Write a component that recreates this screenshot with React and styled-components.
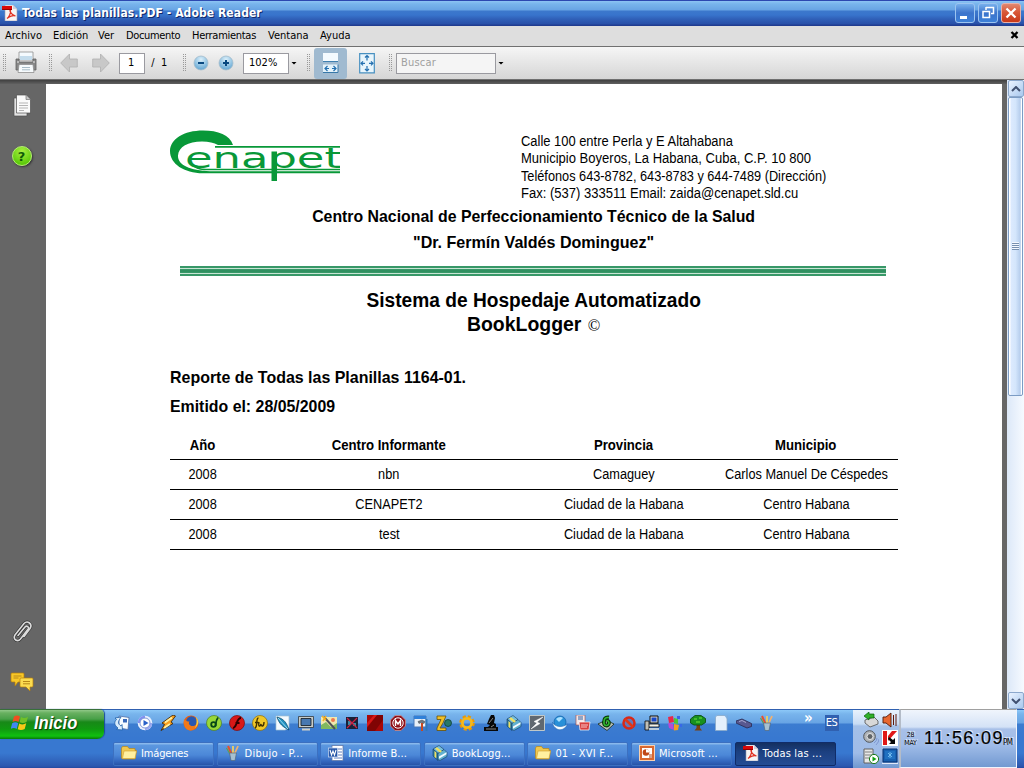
import React from 'react';
import styled, { createGlobalStyle } from 'styled-components';

const Global = createGlobalStyle`
  *{box-sizing:border-box}
  html,body{margin:0;padding:0;overflow:hidden}
  body{font:11px "DejaVu Sans Condensed","DejaVu Sans",sans-serif;color:#000;cursor:default}
  svg{display:block;flex:none}
`;

const Screen = styled.div`width:1024px;height:768px;display:flex;flex-direction:column;overflow:hidden;background:#666;`;

/* ---------- window chrome ---------- */
const TitleBar = styled.header`
  height:26px;flex:none;display:flex;align-items:center;padding:0 3px 0 2px;color:#fff;
  background:linear-gradient(#2c48b0 0,#2c48b0 1px,#8cc4f4 1px,#78b4ec 4px,#68a4e4 10px,#3c78cc 11px,#3874cc 15px,#3060b8 19px,#2850a8 24px,#203c90 25px);
`;
const Title = styled.h1`
  flex:1;margin:0 0 0 4px;font:bold 12px "DejaVu Sans Condensed","DejaVu Sans",sans-serif;letter-spacing:.08px;
  text-shadow:1px 1px 0 #102868;white-space:nowrap;
`;
const WindowButton = styled.button`
  width:20px;height:20px;margin-left:3px;padding:0;border:1px solid ${p => (p.$close ? '#e8b0a8' : '#9cc4f0')};border-radius:3px;
  background:${p => (p.$close ? 'linear-gradient(#e08870,#d85838 45%,#c83818)' : 'linear-gradient(#78b0ec,#3c74cc 50%,#3c80d8)')};
  display:flex;align-items:center;justify-content:center;
`;
const MenuBar = styled.nav`
  height:20px;flex:none;display:flex;align-items:center;padding:0 5px 2px;background:#dedede;
`;
const MenuItem = styled.span`width:${p => p.$w}px;letter-spacing:${p => p.$ls || 0}px;white-space:nowrap;`;
const MenuClose = styled.span`margin-left:auto;`;
const Toolbar = styled.div`
  height:34px;flex:none;display:flex;align-items:center;padding-left:3px;
  border-top:1px solid #707070;border-bottom:1px solid #707070;background:linear-gradient(#f6f6f6,#ececec 30%,#d6d6d6);
`;
const Grip = styled.i`
  width:4px;height:18px;flex:none;margin-right:${p => p.$gap}px;
  background:radial-gradient(circle at .5px .5px,#999 .7px,transparent .8px) 0 0/2px 2px;
`;
const Slot = styled.span`width:${p => p.$w}px;flex:none;display:flex;align-items:center;white-space:pre;line-height:19px;`;
const PageTotal = styled(Slot)`padding-bottom:2px;`;
const Field = styled.span`
  width:${p => p.$w}px;height:21px;flex:none;padding-left:${p => p.$pad}px;border:1px solid #9a9aa0;background:${p => (p.$dim ? '#f5f5f5' : '#fff')};
  color:${p => (p.$dim ? '#a0a0a0' : '#000')};line-height:18px;letter-spacing:${p => p.$ls || 0}px;
`;
const Caret = styled.i`
  width:6px;height:3px;flex:none;margin:0 ${p => p.$gap || 0}px 0 2px;background:#000;clip-path:polygon(0 0,100% 0,50% 100%);
`;
const Toggle = styled.span`
  width:33px;height:31px;flex:none;margin-right:12px;border-radius:3px;background:#a0bad0;display:flex;align-items:center;justify-content:center;
`;

/* ---------- document area ---------- */
const Shadow = styled.div`height:4px;background:linear-gradient(#404040,#606060);`;
const Body = styled.div`height:629px;flex:none;display:flex;`;
const Left = styled.div`width:1007px;display:flex;flex-direction:column;`;
const Work = styled.div`flex:1;display:flex;`;
const SideBar = styled.aside`
  width:46px;display:flex;flex-direction:column;align-items:center;padding:10px 3px 17px 0;background:#666;
`;
const SideIcon = styled.span`margin-bottom:${p => p.$gap || 0}px;${p => p.$push && 'margin-top:auto;'}`;
const Page = styled.main`width:956px;background:#fff;padding:46px 104px 0 124px;`;
const Fit = styled.span`
  display:inline-block;white-space:nowrap;transform:scaleX(${p => p.$x || 0.92});transform-origin:${p => (p.$left ? 'left' : 'center')} center;
`;
const Letterhead = styled.div`height:74px;display:flex;`;
const Address = styled.address`
  margin:3px 0 0 181px;width:306px;font:normal 14px/17.4px "Liberation Sans",Arial,sans-serif;
  display:flex;flex-direction:column;align-items:flex-start;color:#000;
`;
const Institution = styled.p`margin:0;text-align:center;font:bold 17px/26px "Liberation Sans",Arial,sans-serif;white-space:nowrap;`;
const Rule = styled.div`
  height:10px;margin:10px 12px 12px 10px;
  background:linear-gradient(#389868 0 2px,#c8e4d4 2px 3px,#389868 3px 4px,#309060 4px 6px,#389868 6px 7px,#c8e4d4 7px 8px,#389868 8px 10px);
`;
const System = styled.p`margin:0;text-align:center;font:bold 20px/24px "Liberation Sans",Arial,sans-serif;`;
const Mark = styled.span`font:17px/20px "Liberation Serif",serif;margin-left:1px;`;
const ReportInfo = styled.div`margin:27px 0 10px;font:bold 17px/29px "Liberation Sans",Arial,sans-serif;`;
const Row = styled.div`
  width:728px;height:${p => (p.$head ? 29 : 30)}px;display:grid;grid-template-columns:65px 308px 161px 194px;align-items:center;justify-items:center;
  padding-bottom:${p => (p.$head ? 0 : 1)}px;
  border-bottom:1px solid #000;font:${p => (p.$head ? 'bold 14px' : '14px')}/28px "Liberation Sans",Arial,sans-serif;
  & > :last-child{margin-left:10px;}
`;
const ScrollBar = styled.div`width:17px;height:629px;display:flex;flex-direction:column;background:linear-gradient(90deg,#dce8f8,#f6faff);`;
const ScrollKey = styled.button`
  width:16px;height:17px;margin:0 0 0 1px;padding:0;flex:none;border:1px solid #8ca8cc;border-radius:2px;background:linear-gradient(135deg,#eaf3ff,#a9c8ee);
  display:flex;align-items:center;justify-content:center;
`;
const Thumb = styled.div`
  width:15px;height:299px;margin:0 0 auto 1px;padding-bottom:2px;border:1px solid #7c9cc4;border-radius:2px;
  background:linear-gradient(90deg,#fff 0 1px,#dceafe 2px,#d4e6fc 50%,#b4ccec 88%,#fff 90%);
  display:flex;align-items:center;justify-content:center;
`;
const Ridges = styled.i`width:7px;height:8px;background:repeating-linear-gradient(#f4f8ff 0 1px,#7890b0 1px 2px);`;

/* ---------- task bar ---------- */
const TaskBar = styled.footer`
  height:59px;flex:none;display:flex;
  background:linear-gradient(#3060b0 0 1px,#8cc8f8 1px,#78b4ec 5px,#68a4e4 14px,#3c7cd0 15px,#3878d0 29px,#3878d0 44px,#2c58b0 57px,#2448a0);
`;
const Start = styled.button`
  width:104px;height:30px;flex:none;display:flex;align-items:center;padding:0 0 3px 11px;margin:0;border:0;border-radius:0 5px 7px 0;color:#fff;
  background:linear-gradient(#387038 0 1px,#90c888 1px,#68b060 4px,#48a048 10px,#188818 13px,#109810 20px,#10c010 27px,#087808);
  box-shadow:1px 0 1px #184c98;font:italic bold 18px/20px "Liberation Sans",sans-serif;text-shadow:1px 1px 1px #083808;
`;
const StartText = styled(Fit)`margin-left:4px;`;
const Bars = styled.div`width:749px;display:flex;flex-direction:column;`;
const Launch = styled.div`height:28px;display:flex;align-items:center;padding-left:10px;`;
const LaunchItem = styled.span`width:23.04px;flex:none;display:flex;`;
const More = styled.span`margin:-10px 0 0 22px;color:#fff;font:bold 15px "DejaVu Sans Condensed",sans-serif;`;
const Lang = styled.span`margin-left:12px;padding-left:1px;width:14px;height:16px;background:#3060b0;color:#fff;line-height:16px;letter-spacing:-.3px;`;
const Tasks = styled.div`display:flex;gap:2.6px;padding:5px 0 0 9px;`;
const Task = styled.button`
  width:101px;height:24px;flex:none;display:flex;align-items:center;gap:4px;padding:0 0 2px 7px;color:#fff;border:1px solid ${p => (p.$on ? '#102c68' : '#3c70c0')};
  border-radius:2px;font:11px "DejaVu Sans Condensed","DejaVu Sans",sans-serif;white-space:nowrap;
  background:${p => (p.$on ? 'linear-gradient(#143060,#1c4080 40%,#244c94)' : 'linear-gradient(#88b8ec 0 1px,#5c98e0 2px,#4c88d8 12px,#3468c0 18px,#2854a8)')};
`;
const TaskText = styled.span`letter-spacing:${p => p.$ls || 0}px;`;
const Tray = styled.div`
  width:46px;display:grid;grid-template-columns:16px 16px;grid-auto-rows:16px;gap:3px;row-gap:2px;padding:3px 0 0 10px;
  background:linear-gradient(#3060b0 0 1px,#e8f2fc 1px,#c8dcf4 15px,#a4c0e8 17px,#a0bce8 44px,#7098d0);
`;
const Clock = styled.div`
  width:118px;display:flex;align-items:center;border:1px solid #f0f4fc;border-top-color:#a0a0a0;border-left:2px solid #b4bcc8;padding-left:2px;
  background:linear-gradient(#f0f5fc,#d4e2f6 17px,#a8c0e8 19px,#a0bce8 35px,#7098d0 58px);text-shadow:1px -1px 0 #e4ecf8;
`;
const DateText = styled.span`width:15px;font:7px/8px "DejaVu Sans Condensed",sans-serif;text-align:center;letter-spacing:-.2px;`;
const Time = styled.span`margin-left:6px;font:18px "Liberation Sans",sans-serif;letter-spacing:1.4px;-webkit-text-stroke:.2px #000;`;
const Meridiem = styled.span`margin:7px 0 0 -1px;font:8px "DejaVu Sans Condensed",sans-serif;letter-spacing:-.5px;`;

/* ---------- icons ---------- */
const I = ({ s = 16, children }) => <svg width={s} height={s} viewBox="0 0 16 16">{children}</svg>;

const Pdf = () => (
  <I>
    <path d="M3 0h8l4 4v12H3z" fill="#f6f4f4" stroke="#a0a0b0" strokeWidth=".6" />
    <path d="M11 0v4h4" fill="#d0d0dc" />
    <path d="M5 13.500C7 12 9 8 8.500 5.500 7 4.500 8.500 9.500 13.500 11 11 10 7 11.500 5 13.500" fill="none" stroke="#e03020" strokeWidth="1.200" />
    <path d="M0 1h10v4H0z" fill="#d80808" /><path d="M0 4h10v1H0z" fill="#900" />
  </I>
);
const Folder = () => (
  <I><path d="M0.500 3l1-1.500h5L8 3.500h6v2H15.500L14 14H1.500L.5 13z" fill="#f0c850" stroke="#b88818" strokeWidth=".7" /><path d="M3 6h12.500L14 13.500H1.500z" fill="#fff0a0" stroke="#d0a030" strokeWidth=".6" /></I>
);
const Brushes = () => (
  <I>
    <path d="M3 1l4 9" stroke="#e8502c" strokeWidth="2" /><path d="M8 1v9" stroke="#f0d060" strokeWidth="1.800" /><path d="M13 1l-4 9" stroke="#f0b070" strokeWidth="1.800" />
    <path d="M1.500 3l4 7" stroke="#60a050" strokeWidth="1.200" /><path d="M4.500 8h7l-1.500 7.500H6z" fill="#a8c0d0" stroke="#506880" strokeWidth=".7" />
  </I>
);
const Books = () => (
  <I>
    <path d="M1 4l6-3.500 5 4-6 4z" fill="#78c0dc" stroke="#184060" strokeWidth=".6" />
    <path d="M1 4v7l5 4.500V8.500z" fill="#2878a8" stroke="#184060" strokeWidth=".6" />
    <path d="M6 8.500l6-4 3 3v4L8 15.500l-2-1z" fill="#60b0d0" stroke="#184060" strokeWidth=".6" />
    <path d="M3 3.500l2-1.200 5 4-2 1.400zM2.500 6v6l1.800 1.200V7.500z" fill="#f0e060" /><path d="M7 11.500l7.500-4.300v2L7 13.800z" fill="#f4fbff" />
  </I>
);
const Word = () => (
  <I><rect x="4" y="0.500" width="11" height="15" fill="#fff" stroke="#6078a8" strokeWidth=".8" /><path d="M10 4h4M10 7h4M10 10h4M6 13h8" stroke="#6080c0" /><rect x="0.500" y="3" width="9" height="9" fill="#2858a8" stroke="#c8d8f0" strokeWidth=".7" /><path d="M2 5l1.500 5L5 6l1.500 4L8 5" fill="none" stroke="#fff" strokeWidth="1.100" /></I>
);
const PowerPoint = () => (
  <I><rect x="0.500" y="0.500" width="15" height="15" fill="#d86830" stroke="#f8d0b0" /><rect x="3" y="3" width="10" height="10" fill="#fff" /><circle cx="7" cy="7.500" r="3.300" fill="#c04818" /><path d="M7 7.500V4.200a3.300 3.300 0 0 1 3.300 3.300z" fill="#fff" /><path d="M10 10h3M10 12h3" stroke="#b04010" /></I>
);

const Sync = () => <I><path d="M5 1l10 1.500-1 12L5 13z" fill="#f8fcff" stroke="#5070a8" strokeWidth=".8" /><path d="M9 4h4v3.500H9z" fill="#3868b8" /><path d="M1 3l6-1-1.500 2.500C4 7 4 9 7 11l1-1.500.5 5.500-6-.5L4 13C0 10 0 7 2.500 4.500z" fill="#d8ecfc" stroke="#2060a8" strokeWidth=".8" /></I>;
const Player = () => <I><circle cx="8" cy="8" r="7.300" fill="#e8f0ff" /><path d="M8 .7A7.300 7.300 0 0 0 .7 8H4a4 4 0 0 1 4-4z" fill="#8090f0" /><path d="M15.300 8A7.300 7.300 0 0 1 8 15.300V12a4 4 0 0 0 4-4z" fill="#98a8f0" /><circle cx="8" cy="8" r="5" fill="#fff" stroke="#8098d8" /><path d="M6.500 5l5 3-5 3z" fill="#2860c8" /></I>;
const Winamp = () => <I><path d="M13 0L2 8l2.500 1.500L1 15.500 13 8.500l-2-1.500L15.500 1z" fill="#f8a020" stroke="#402808" strokeWidth=".9" /><path d="M12 2.500L5 7.500M4 13l6-4" stroke="#fff0a0" strokeWidth="1.800" /></I>;
const Firefox = () => <I><circle cx="8" cy="8" r="7.500" fill="#e86010" /><circle cx="8.500" cy="6.500" r="5.300" fill="#2858b0" /><path d="M1 4c2 2 3 2.500 5.500 2.500-1.500 2 0 4.500 3 4.500s5-2 5-5c1 5-3 9.500-7 9.500S0 12 1 4z" fill="#f07818" /><path d="M13 2c3 3 3 8-1 11 2-4 2-7 1-11z" fill="#f8d040" /></I>;
const Dreamweaver = () => <I><circle cx="8" cy="8" r="7.500" fill="#98d838" stroke="#508020" strokeWidth=".7" /><circle cx="7.500" cy="9.500" r="2.300" fill="none" stroke="#084818" strokeWidth="1.800" /><path d="M9.500 11C10 7 10 5 12 2.500" stroke="#084818" strokeWidth="1.800" fill="none" /></I>;
const Flash = () => <I><circle cx="8" cy="8" r="7.500" fill="#d81818" stroke="#800808" strokeWidth=".7" /><path d="M12 3C7 3 8.500 12 4 13M6.500 8h4" stroke="#300000" strokeWidth="2" fill="none" /></I>;
const Fireworks = () => <I><circle cx="8" cy="8" r="7.500" fill="#f0c828" stroke="#907008" strokeWidth=".7" /><path d="M6.500 3C3.500 3 6 12 3 13M3 7.500h3.500M7 7c-1 5 1 5 2 2 0 3 3 3 3-2" stroke="#403000" strokeWidth="1.400" fill="none" /></I>;
const Quill = () => <I><path d="M1 1h13v12l-4 2H1z" fill="#f4faff" stroke="#a0c0d0" strokeWidth=".7" /><path d="M2 2c8 2 10 7 12 13C8 12 4 9 2 2z" fill="#2090c0" stroke="#084868" strokeWidth=".7" /><path d="M3 3l10 11" stroke="#c0f0ff" strokeWidth=".8" /></I>;
const Monitor = () => <I><path d="M.5 1.500h15v11H.5z" fill="#c8ccc8" stroke="#303840" strokeWidth=".8" /><path d="M3 3.500h10v7H3z" fill="#4878b0" stroke="#101820" strokeWidth=".8" /><path d="M4 14.500h8" stroke="#d0d0c8" strokeWidth="2" /></I>;
const Wand = () => <I><path d="M0 2h16v12H0z" fill="#f0e8b0" /><path d="M0 10l5-3 5 5 6-4v6H0z" fill="#80b860" /><circle cx="12" cy="5" r="2" fill="#f07850" /><path d="M3 2l11 12" stroke="#505058" strokeWidth="2" /><path d="M1 1l4 4M5 1L2 6" stroke="#f8b020" strokeWidth="1.500" /></I>;
const Crossed = () => <I><path d="M2 2h12v12H2z" fill="#182038" /><path d="M4 6h3v4H4zM9 8h3v3H9z" fill="#3888a0" /><path d="M3 3l10 10M13 3L3 13" stroke="#d02040" strokeWidth="1.200" /></I>;
const RedSquare = () => <I><path d="M0 0h16v16H0z" fill="#a80808" /><path d="M10 0h6v5L8 16H0v-3z" fill="#800404" /><path d="M7 0h3L0 12V8z" fill="#d81818" /></I>;
const McAfee = () => <I><path d="M5 .5h6L15.500 5v6L11 15.500H5L.5 11V5z" fill="#901018" stroke="#c89090" strokeWidth=".8" /><circle cx="8" cy="8" r="5.200" fill="#901018" stroke="#fff" /><path d="M5.500 11V5.500L8 9l2.500-3.500V11" stroke="#fff" strokeWidth="1.400" fill="none" /></I>;
const Tools = () => <I><path d="M1 1h12v11H1z" fill="#e8f0f8" stroke="#4878b8" /><path d="M1 1h12v3H1z" fill="#3080d8" /><path d="M5 6.500l4-1.500 3 1.500-1 2-3-1-2 1z" fill="#707880" stroke="#404850" strokeWidth=".5" /><path d="M9 8v8" stroke="#c84820" strokeWidth="2" /><path d="M13.500 4v12" stroke="#3078b8" strokeWidth="2" /></I>;
const Seven = () => <I><path d="M1 1h9L7 8l-3 5h6v2.500H1V13l4-8.500H1z" fill="#f0c028" stroke="#685008" strokeWidth=".8" /><circle cx="12" cy="8" r="3.500" fill="#287868" stroke="#083828" strokeWidth=".7" /></I>;
const Gear = () => <I><circle cx="8" cy="8" r="6.300" fill="none" stroke="#e89808" strokeWidth="3" strokeDasharray="3 1.950" /><circle cx="8" cy="8" r="4.600" fill="none" stroke="#f8b818" strokeWidth="2.800" /></I>;
const Microscope = () => <I><path d="M8 0h3l1 3-1 5 2 1v3h2v4H1v-4h4l2-2-3-1 2-5z" fill="#080808" /><path d="M6 8l4-5M3 14h10M8 12l3-2" stroke="#a8a8a8" strokeWidth=".8" /></I>;
const Bolt = () => <I><path d="M.5.5h15v15H.5z" fill="#606870" stroke="#c0c8c8" /><path d="M14 2L5 6.500 8 8l-6 6 9-5.500-3-1.500z" fill="#fff" stroke="#fff" strokeWidth=".5" /></I>;
const Globe = () => <I><circle cx="8" cy="7" r="6" fill="#2890d8" stroke="#1060a8" strokeWidth=".7" /><path d="M4 4c2-2 5-3 7-1L7 7z" fill="#a8e0ff" /><path d="M0 7c3 5 10 6 15.500 2-3 8-13 8-15.500-2z" fill="#f4fbff" stroke="#2870b8" strokeWidth=".7" /></I>;
const Papers = () => <I><path d="M1 0h9v10H1z" fill="#f4e8e8" stroke="#a05858" strokeWidth=".7" /><path d="M3 2h5M3 4h5" stroke="#3060a0" /><path d="M4 7h11l-1 8H5z" fill="#d84040" stroke="#fff" strokeWidth=".7" /><path d="M6 10h7M6 12h6" stroke="#f8c8c8" /></I>;
const GreenSix = () => <I><path d="M0 9l8-4 8 4-7 6.500z" fill="#b8c0b8" stroke="#182818" strokeWidth=".8" /><path d="M11 2.500C7 2 6 4 6 7.500a2.500 2.500 0 1 0 2.500-2" stroke="#083808" strokeWidth="3.800" fill="none" /><path d="M11 2.500C7 2 6 4 6 7.500a2.500 2.500 0 1 0 2.500-2" stroke="#30b830" strokeWidth="1.600" fill="none" /></I>;
const NoEntry = () => <I><circle cx="8" cy="8" r="5.500" fill="#6878b8" stroke="#d82818" strokeWidth="2.500" /><path d="M4 4l8 8" stroke="#e03818" strokeWidth="2.500" /></I>;
const Pc = () => <I><path d="M6 1h8v7H6z" fill="#d8d8d0" stroke="#080808" /><path d="M7.500 2.500h5v4h-5z" fill="#1848c8" /><path d="M4 9h11v3H4z" fill="#f0f0e8" stroke="#080808" strokeWidth=".8" /><path d="M1 6h4v9H1z" fill="#c0c0b8" stroke="#080808" strokeWidth=".8" /><path d="M5 14h10" stroke="#e8e8e0" strokeWidth="1.500" /></I>;
const Cubes = () => <I><path d="M1 2l5-1 1 6-5 1z" fill="#e82848" /><path d="M7 3l4 1v5L7 8z" fill="#48c838" /><path d="M1 8l5 1 1 6-5-2z" fill="#b848d8" /><path d="M7 9l5 1-1 5-4 .5z" fill="#f0a020" /><path d="M10 1h3v3h-3zM13 9h2v3h-2z" fill="#3868e8" /></I>;
const Tree = () => <I><path d="M6.500 8h3.500v5l2 2.500H4.500l2-2.500z" fill="#784010" /><path d="M5 .5h6l4.500 3v4l-4 2.500H4L.5 8V4z" fill="#189020" stroke="#044808" strokeWidth=".8" /><path d="M4 4h3M9 3h3M6 7h4" stroke="#50c830" strokeWidth="1.300" /></I>;
const Sheet = () => <I><path d="M4 .5h10v15H2.500V2z" fill="#e4f0fc" stroke="#88a8c8" strokeWidth=".8" /><path d="M11 0h3v4z" fill="#80b0e0" /></I>;
const Gadget = () => <I><path d="M0 6l6-2 9.500 4.500v3L11 13 0 8z" fill="#585890" stroke="#282850" strokeWidth=".8" /><path d="M3 6.500l3-1 4 2" stroke="#a8a8d0" fill="none" /></I>;

const launchIcons = [Sync, Player, Winamp, Firefox, Dreamweaver, Flash, Fireworks, Quill, Monitor, Wand, Crossed, RedSquare, McAfee, Tools, Seven, Gear, Microscope, Books, Bolt, Globe, Papers, GreenSix, NoEntry, Pc, Cubes, Tree, Sheet, Gadget, Brushes];

const Printer = () => (
  <svg width="22" height="24" viewBox="0 0 22 24">
    <path d="M4 1h14v8H4z" fill="#f4fafe" stroke="#909090" strokeWidth=".8" /><path d="M5 5h12v4H5z" fill="#c4dcec" />
    <path d="M1 8h3v3h14V8h3v11H1z" fill="#888" stroke="#606060" strokeWidth=".8" /><path d="M2 10h2v2h14v-2h2v2H2z" fill="#b8b8b8" />
    <path d="M4 13.500h14l1 8H3z" fill="#f6fafc" stroke="#909090" strokeWidth=".8" /><path d="M7 16.500h8M7 18.800h8" stroke="#a8bcc8" />
  </svg>
);
const Arrow = ({ flip }) => (
  <svg width="18" height="20" viewBox="0 0 18 20"><path transform={flip ? 'matrix(-1 0 0 1 18 0)' : undefined} d="M.7 10L9.500 1v5H17.300v8H9.500v5z" fill="#c8c8c8" stroke="#b0b0b0" strokeWidth=".8" /></svg>
);
const Round = ({ plus }) => (
  <svg width="16" height="16" viewBox="0 0 16 16">
    <defs><radialGradient id={plus ? 'rp' : 'rm'} cx=".5" cy=".25" r=".8"><stop offset="0" stopColor="#dcf0fa" /><stop offset="1" stopColor="#58a0d0" /></radialGradient></defs>
    <circle cx="8" cy="8" r="7" fill={`url(#${plus ? 'rp' : 'rm'})`} stroke="#a4bccc" strokeWidth=".8" /><path d={plus ? 'M5 8h6M8 5v6' : 'M5 8h6'} stroke="#084880" strokeWidth="2" />
  </svg>
);
const FitWidth = () => (
  <svg width="17" height="22" viewBox="0 0 17 22">
    <path d="M1 1h15v9H1z" fill="#f4fafe" /><path d="M1 9.500h15" stroke="#4080b0" /><path d="M1 12.500h15v8H1z" fill="#e4f2fa" /><path d="M1 20.500h15v-8" fill="none" stroke="#3878a8" />
    <path d="M3 16.500h4M10 16.500h4M5.500 14L3 16.500 5.500 19M11.500 14l2.500 2.500-2.500 2.500" fill="none" stroke="#2470b0" strokeWidth="1.200" />
  </svg>
);
const FitPage = () => (
  <svg width="16" height="21" viewBox="0 0 16 21">
    <path d="M.7.700h14.600v19.200H.7z" fill="#e8f5fc" stroke="#4890c0" strokeWidth="1.200" />
    <path d="M8 2.500v5M8 13v5M2 10.300h4M10 10.300h4M6 4.500l2-2 2 2M6 16l2 2 2-2M4 8.300l-2 2 2 2M12 8.300l2 2-2 2" fill="none" stroke="#2470b0" strokeWidth="1.200" />
  </svg>
);
const Pages = () => (
  <svg width="20" height="24" viewBox="0 0 20 24">
    <path d="M2 4h13v18H2z" fill="#e4e4e4" stroke="#505050" strokeWidth=".7" /><path d="M4.500 1h9.500l4.500 4.500V19h-14z" fill="#fafafa" stroke="#505050" strokeWidth=".7" />
    <path d="M14 1v4.500h4.500" fill="#c8c8c8" stroke="#606060" strokeWidth=".6" /><path d="M7 9h9M7 11.500h9M7 14h9M7 16.500h5" stroke="#b4b4b4" />
  </svg>
);
const HelpBall = styled.span`
  width:20px;height:20px;display:flex;align-items:center;justify-content:center;border-radius:50%;border:1px solid #b4f070;
  background:radial-gradient(circle at 50% 25%,#a8f040,#58c808 80%);color:#105c08;font:bold 13px "DejaVu Sans",sans-serif;box-shadow:1px 1px 2px #333;
`;
const Clip = () => (
  <svg width="22" height="25" viewBox="0 0 22 25">
    <g fill="none" strokeLinecap="round">
      <path d="M7 15.500L14 7c1.800-2 4.500 0 3 2.300L9.500 19c-3 3.500-8 .5-5.500-4L13 3.500c3.500-3.500 9 .5 6 5l-6 8" stroke="#303030" strokeWidth="2.800" />
      <path d="M7 15.500L14 7c1.800-2 4.500 0 3 2.300L9.500 19c-3 3.500-8 .5-5.500-4L13 3.500c3.500-3.500 9 .5 6 5l-6 8" stroke="#dcdcdc" strokeWidth="1.600" />
    </g>
  </svg>
);
const Bubbles = () => (
  <svg width="24" height="20" viewBox="0 0 24 20">
    <path d="M2 1h11q1 0 1 1v7q0 1-1 1H8l-3 4v-4H2q-1 0-1-1V2q0-1 1-1z" fill="#f8c828" stroke="#b88008" strokeWidth=".7" /><path d="M3.500 4h8M3.500 6h5" stroke="#b88818" />
    <path d="M11 6h11q1 0 1 1v7q0 1-1 1h-2v4l-4-4h-5q-1 0-1-1V7q0-1 1-1z" fill="#fcdc50" stroke="#b88008" strokeWidth=".7" /><path d="M13 9.500h7M13 11.800h7" stroke="#b88818" />
  </svg>
);
const Flag = () => (
  <svg width="19" height="18" viewBox="0 0 19 18">
    <path d="M3 2.500q3-2 6 0L7.500 8q-3-1.800-6 0z" fill="#f05020" /><path d="M10 3q3.500 2 7-.3L15.500 8q-3.500 2-7 .3z" fill="#70c028" />
    <path d="M1.200 9.200q3-1.800 6 0L5.700 15q-3-1.800-6 0z" fill="#4088f0" /><path d="M8.200 9.500q3.500 2 7-.2L13.700 15q-3.500 2-7 .3z" fill="#f8c818" />
  </svg>
);
const LogoText = styled.text`font:29px "DejaVu Sans",sans-serif;fill:#089838;`;
const Logo = () => (
  <svg width="170" height="52" viewBox="0 0 170 52">
    <path d="M63 15C60 5 48 .5 33 .5 14 .5 0 9 0 21c0 13 14 22 33 22.300h137v-2H40C20 40.500 7.500 35 8 25.500 8.500 17 18 11.500 32 11.500c7 0 12 1.300 16 3.500z" fill="#089838" />
    <path d="M45 16h125v1.800H45z" fill="#089838" />
    <path d="M22 35.500q6 3 14 3.200h134v1.600H34q-8-.9-12-4.800z" fill="#089838" />
    <LogoText x="15" y="37.500" textLength="157" lengthAdjust="spacingAndGlyphs">enapet</LogoText>
    <path d="M101.500 21.500h5.500V51h-5.500z" fill="#089838" />
  </svg>
);

const Drive = () => <I><path d="M2 8l9-3 4 4v3l-8 3-5-4z" fill="#d8d8d8" stroke="#505050" strokeWidth=".8" /><path d="M1 4l5-4v2h5v4H6v2z" fill="#30b028" stroke="#086008" strokeWidth=".7" /></I>;
const Speaker = () => <I><path d="M1 5h3l5-4v14L4 11H1z" fill="#e86830" stroke="#501808" strokeWidth=".9" /><path d="M11.500 3v10M14 2v12" stroke="#601808" strokeWidth="1" /></I>;
const Volume = () => <I><circle cx="6.500" cy="6.500" r="5.800" fill="#b0b4b8" stroke="#505458" /><circle cx="7" cy="6.500" r="3" fill="#606468" stroke="#e8e8e8" /><path d="M11 13q3-2 3-5M13 15q3-3 3-6" stroke="#8098d0" fill="none" /></I>;
const Kaspersky = () => <I><path d="M0 0h16v16H0z" fill="#fff" /><path d="M1 1h4v14H1z" fill="#e01818" /><path d="M10 1h5L6 11V6z" fill="#e01818" /><path d="M7 7l4 3 2-2v6H7l2-2-3-3z" fill="#080808" /></I>;
const Server = () => <I><path d="M1 1h9v14H1z" fill="#e8e8e8" stroke="#606060" /><path d="M2 4h7M2 7h7M2 10h4" stroke="#808080" /><circle cx="11" cy="11" r="4.600" fill="#fff" stroke="#187818" /><path d="M9.500 8.500l4 2.500-4 2.500z" fill="#10a010" /></I>;
const Screenlet = () => <I><path d="M1 1h14v13H1z" fill="#1860b0" stroke="#083070" /><path d="M3 3h10v8H3z" fill="#2070c0" /><path d="M6 5l4 4M10 5L6 9M8 4v6" stroke="#80c8f8" strokeWidth=".8" /><path d="M0 15.500h16" stroke="#e0e8f8" /></I>;

/* ---------- data ---------- */
const menus = [['Archivo', 48], ['Edición', 45, -0.1], ['Ver', 28], ['Documento', 66, -0.35], ['Herramientas', 76, -0.28], ['Ventana', 52], ['Ayuda', 40]];
const address = [
  ['Calle 100 entre Perla y E Altahabana', 0.923], ['Municipio Boyeros, La Habana, Cuba, C.P. 10 800', 0.93],
  ['Teléfonos 643-8782, 643-8783 y 644-7489 (Dirección)', 0.91], ['Fax: (537) 333511 Email: zaida@cenapet.sld.cu', 0.93],
];
const rows = [
  ['2008', 'nbn', 'Camaguey', 'Carlos Manuel De Céspedes'],
  ['2008', 'CENAPET2', 'Ciudad de la Habana', 'Centro Habana'],
  ['2008', 'test', 'Ciudad de la Habana', 'Centro Habana'],
];
const tasks = [
  [Folder, 'Imágenes', -0.15], [Brushes, 'Dibujo - P...', 0.25], [Word, 'Informe B...', 0.1], [Books, 'BookLogg...', 0.05],
  [Folder, '01 - XVI F...', 0.2], [PowerPoint, 'Microsoft ...', 0.1], [Pdf, 'Todas las ...', 0.15],
];

export default function App() {
  return (
    <Screen>
      <Global />
      <TitleBar>
        <Pdf />
        <Title>Todas las planillas.PDF - Adobe Reader</Title>
        <WindowButton><I><path d="M3 11h7v3H3z" fill="#fff" /></I></WindowButton>
        <WindowButton><I><path d="M6 2.500h7.500v6H11M6 2v3M3 6.500h6.500v6H3z" stroke="#fff" strokeWidth="1.500" fill="none" /></I></WindowButton>
        <WindowButton $close><I><path d="M3.500 3.500l9 9M12.500 3.500l-9 9" stroke="#fff" strokeWidth="2.300" /></I></WindowButton>
      </TitleBar>
      <MenuBar>
        {menus.map(([t, w, ls]) => <MenuItem key={t} $w={w} $ls={ls}>{t}</MenuItem>)}
        <MenuClose><svg width="9" height="8" viewBox="0 0 9 8"><path d="M1.500 1l6 6M7.500 1l-6 6" stroke="#000" strokeWidth="2.300" /></svg></MenuClose>
      </MenuBar>
      <Toolbar>
        <Grip $gap={8} />
        <Slot $w={34}><Printer /></Slot>
        <Grip $gap={7} />
        <Slot $w={32}><Arrow /></Slot>
        <Slot $w={27}><Arrow flip /></Slot>
        <Field $w={26} $pad={8}>1</Field>
        <PageTotal $w={38}>{'  /  1'}</PageTotal>
        <Grip $gap={6} />
        <Slot $w={25}><Round /></Slot>
        <Slot $w={25}><Round plus /></Slot>
        <Field $w={46} $pad={5}>102%</Field>
        <Caret $gap={10} />
        <Grip $gap={3} />
        <Toggle><FitWidth /></Toggle>
        <Slot $w={30}><FitPage /></Slot>
        <Grip $gap={3} />
        <Field $w={100} $pad={4} $dim $ls={0.2}>Buscar</Field>
        <Caret />
      </Toolbar>
      <Body>
        <Left>
          <Shadow />
          <Work>
            <SideBar>
              <SideIcon $gap={28}><Pages /></SideIcon>
              <SideIcon><HelpBall>?</HelpBall></SideIcon>
              <SideIcon $push $gap={27}><Clip /></SideIcon>
              <SideIcon><Bubbles /></SideIcon>
            </SideBar>
            <Page>
              <Letterhead>
                <Logo />
                <Address>{address.map(([t, x]) => <Fit key={t} $left $x={x}>{t}</Fit>)}</Address>
              </Letterhead>
              <Institution><Fit $x={0.932}>Centro Nacional de Perfeccionamiento Técnico de la Salud</Fit></Institution>
              <Institution><Fit $x={0.945}>"Dr. Fermín Valdés Dominguez"</Fit></Institution>
              <Rule />
              <System><Fit $x={0.957}>Sistema de Hospedaje Automatizado</Fit></System>
              <System><Fit $x={0.972}>BookLogger <Mark>©</Mark></Fit></System>
              <ReportInfo>
                <div><Fit $left $x={0.939}>Reporte de Todas las Planillas 1164-01.</Fit></div>
                <div><Fit $left $x={0.934}>Emitido el: 28/05/2009</Fit></div>
              </ReportInfo>
              <Row $head>{['Año', 'Centro Informante', 'Provincia', 'Municipio'].map(t => <Fit key={t} $x={0.94}>{t}</Fit>)}</Row>
              {rows.map((r, i) => <Row key={i}>{r.map((t, j) => <Fit key={j} $x={0.91}>{t}</Fit>)}</Row>)}
            </Page>
          </Work>
        </Left>
        <ScrollBar>
          <ScrollKey><svg width="10" height="6" viewBox="0 0 10 6"><path d="M1 5l4-4 4 4" stroke="#405070" strokeWidth="2" fill="none" /></svg></ScrollKey>
          <Thumb><Ridges /></Thumb>
          <ScrollKey><svg width="10" height="6" viewBox="0 0 10 6"><path d="M1 1l4 4 4-4" stroke="#405070" strokeWidth="2" fill="none" /></svg></ScrollKey>
        </ScrollBar>
      </Body>
      <TaskBar>
        <Start><Flag /><StartText $left $x={0.92}>Inicio</StartText></Start>
        <Bars>
          <Launch>
            {launchIcons.map((Ico, i) => <LaunchItem key={i}><Ico /></LaunchItem>)}
            <More>»</More>
            <Lang>ES</Lang>
          </Launch>
          <Tasks>{tasks.map(([Ico, t, ls], i) => <Task key={t} $on={i === 6}><Ico /><TaskText $ls={ls}>{t}</TaskText></Task>)}</Tasks>
        </Bars>
        <Tray><Drive /><Speaker /><Volume /><Kaspersky /><Server /><Screenlet /></Tray>
        <Clock><DateText>28 MAY</DateText><Time>11:56:09</Time><Meridiem>PM</Meridiem></Clock>
      </TaskBar>
    </Screen>
  );
}
